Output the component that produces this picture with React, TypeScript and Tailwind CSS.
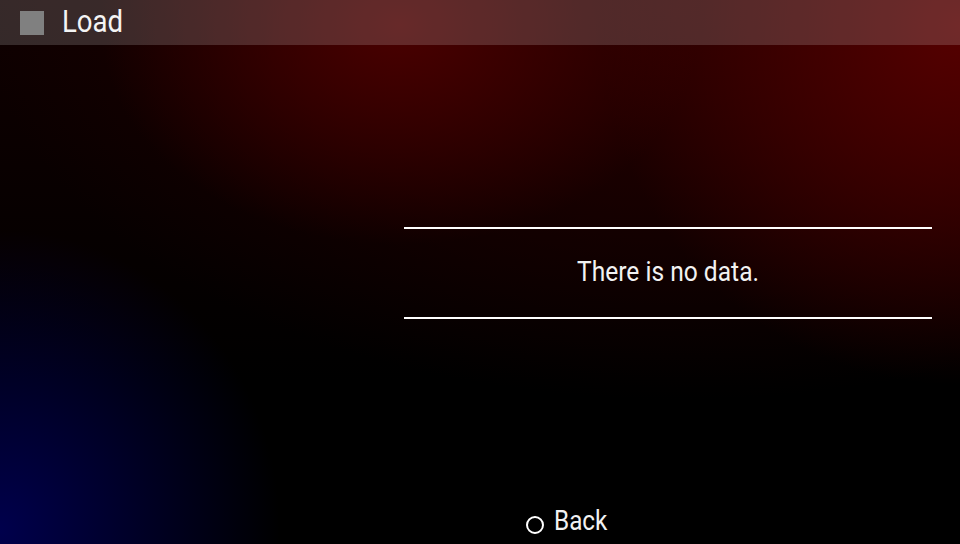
import * as React from 'react';

export default function App() {
  return (
    <div
      className="relative flex h-[544px] w-[960px] flex-col overflow-hidden bg-black text-white bg-[radial-gradient(300px_220px_at_400px_25px,#4a0000,transparent),radial-gradient(360px_360px_at_960px_25px,#560000,transparent),radial-gradient(700px_400px_at_680px_0px,#260000,transparent),radial-gradient(280px_300px_at_0px_530px,#00004c,transparent),linear-gradient(180deg,#100000,#000000_70%)]"
      style={{ fontFamily: 'Roboto, "Noto Sans", sans-serif' }}
    >
      {/* title bar */}
      <div className="flex h-[45px] shrink-0 items-center bg-white/[0.16]">
        <div className="ml-[20px] h-[24px] w-[24px] bg-[#808080]" />
        <span className="ml-[18px] origin-left -translate-y-[1px] scale-x-[0.89] whitespace-nowrap text-[31px] leading-none text-[#f4f4f4]">
          Load
        </span>
      </div>

      {/* body */}
      <div className="flex flex-1 flex-col">
        <div className="flex flex-1 justify-end pr-[28px] pt-[182px]">
          <div className="flex h-[92px] w-[528px] flex-col border-y-2 border-white">
            <div className="flex flex-1 items-center justify-center">
              <span className="-translate-y-[1px] scale-x-[0.91] whitespace-nowrap text-[27px] leading-none text-[#f2f2f2]">
                There is no data.
              </span>
            </div>
          </div>
        </div>

        <div className="flex h-[44px] items-center justify-center gap-[10px] pl-[171px]">
          <span className="h-[18px] w-[18px] translate-y-[3px] rounded-full border-2 border-white" />
          <span className="w-[52px] whitespace-nowrap">
            <span className="inline-block origin-left scale-x-[0.9] text-[27px] leading-none text-[#f2f2f2]">Back</span>
          </span>
        </div>
      </div>
    </div>
  );
}
